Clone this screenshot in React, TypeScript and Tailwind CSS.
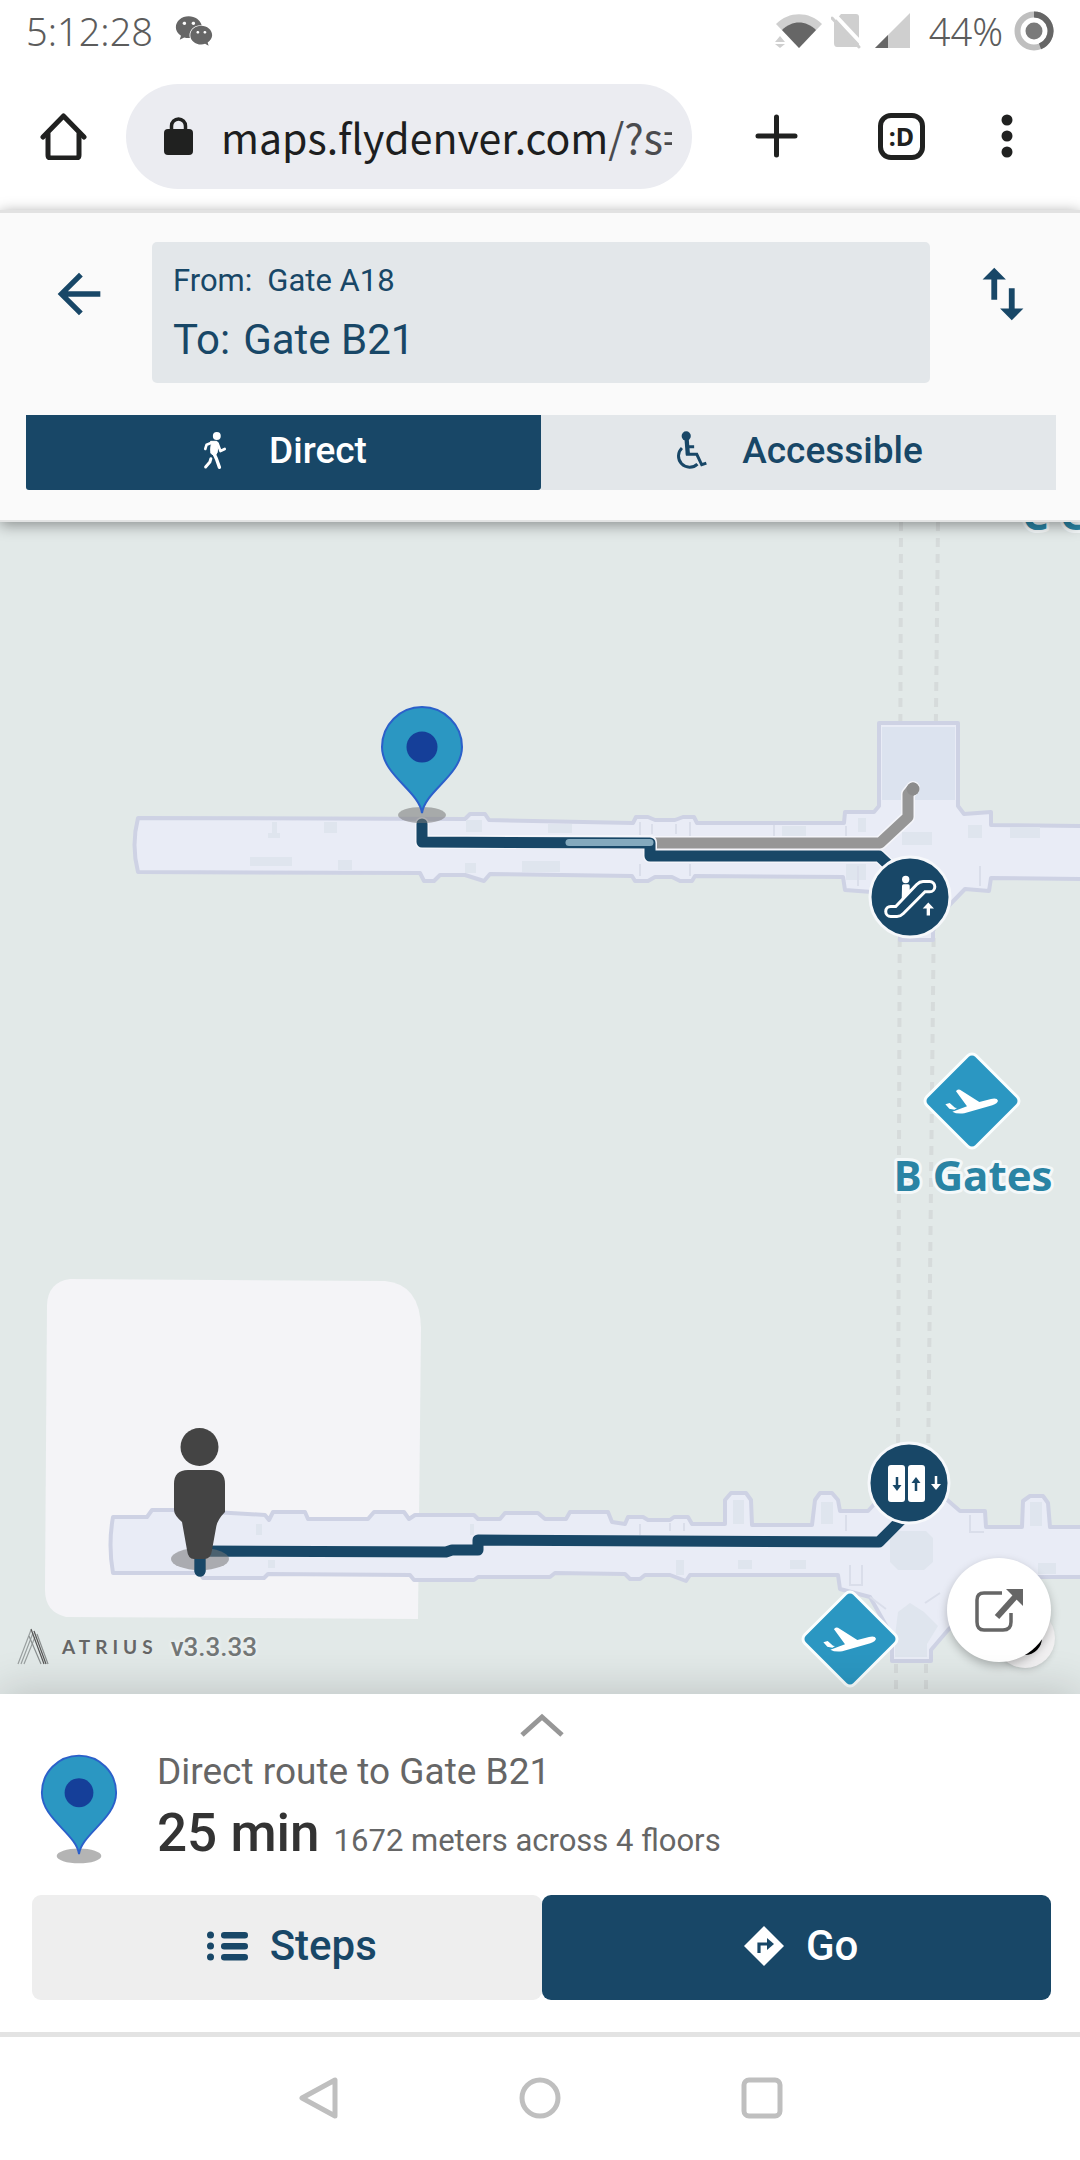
import { FaWeixin } from "react-icons/fa";
import { MdArrowBack, MdSwapVert } from "react-icons/md";

const NAVY = "#184767";

function StatusBar() {
  return (
    <div className="flex h-[62px] items-center justify-between pr-[26px] pl-[26px] font-['Noto_Sans',sans-serif] text-[38px] font-light text-[#5c5c5c]">
      <div className="flex items-center gap-[22px]">
        <span className="leading-[48px]">5:12:28</span>
        <FaWeixin className="h-[34px] w-[38px] text-[#666]" aria-label="WeChat" />
      </div>
      <div className="flex items-center">
        <svg width="48" height="36" viewBox="0 0 48 36" aria-label="Wi-Fi">
          <path d="M1 11C14 -2 34 -2 47 11L24 35Z" fill="#cfcfcf" />
          <path d="M7 17C17 7 31 7 41 17L24 35Z" fill="#666" />
          <path d="M0 29L5 23L10 29ZM0 31L5 35L10 31Z" fill="#cfcfcf" />
        </svg>
        <svg width="30" height="36" viewBox="0 0 30 36" className="ml-[8px]" aria-label="No SIM">
          <path d="M10 1H25Q28 1 28 4V30Q28 34 25 34H6Q3 34 3 30V9Z" fill="#cfcfcf" />
          <path d="M2 0L31 31" stroke="#fff" strokeWidth="4" />
          <path d="M1 5L28 34" stroke="#cfcfcf" strokeWidth="3" strokeLinecap="round" />
        </svg>
        <svg width="36" height="36" viewBox="0 0 36 36" className="ml-[14px]" aria-label="Signal">
          <path d="M0 35L35 0V35Z" fill="#cfcfcf" />
          <path d="M0 35L13 22V35Z" fill="#666" />
        </svg>
        <span className="ml-[18px] leading-[48px]">44%</span>
        <svg width="40" height="40" viewBox="0 0 40 40" className="ml-[11px]" aria-label="Battery">
          <circle cx="20" cy="20" r="16.5" fill="none" stroke="#bfbfbf" strokeWidth="6" />
          <path d="M20 3.500A16.500 16.500 0 0 1 26 35.400" fill="none" stroke="#666" strokeWidth="6" />
          <circle cx="20" cy="20" r="8.500" fill="#7a7a7a" />
        </svg>
      </div>
    </div>
  );
}

function BrowserBar() {
  return (
    <div className="flex h-[148px] items-center pr-[67px] pl-[40px]">
      <button type="button" aria-label="Home">
        <svg width="47" height="48" viewBox="0 0 47 48" fill="none" stroke="#202120" strokeWidth="5" strokeLinecap="round" strokeLinejoin="round">
          <path d="M3 25L23.500 4L44 25" />
          <path d="M8 22V43Q8 46 11 46H36Q39 46 39 43V22" />
        </svg>
      </button>
      <div className="ml-[39px] flex h-[105px] min-w-0 flex-1 items-center rounded-full bg-[#ebecf1] pr-[20px] pl-[38px]">
        <svg width="29" height="38" viewBox="0 0 29 38" className="shrink-0" aria-hidden="true">
          <rect x="0" y="12" width="29" height="26" rx="4" fill="#202120" />
          <path d="M7.500 14V9a7 7 0 0 1 14 0V14" fill="none" stroke="#202120" strokeWidth="3.500" />
        </svg>
        <div className="ml-[28px] min-w-0 flex-1 overflow-hidden font-['Noto_Sans_CJK_SC','Noto_Sans',sans-serif] text-[41px] leading-[60px] whitespace-nowrap text-[#1d1e20]">
          maps.flydenver.com<span className="text-[#4a4b4f]">/?s=</span>
        </div>
      </div>
      <div className="ml-[63px] flex items-center">
        <button type="button" aria-label="New tab">
          <svg width="43" height="44" viewBox="0 0 43 44" stroke="#202120" strokeWidth="5" strokeLinecap="round">
            <path d="M21.500 3V41M3 22H40" />
          </svg>
        </button>
        <button type="button" aria-label="Tabs" className="ml-[80px] flex h-[47px] w-[47px] items-center justify-center rounded-[13px] border-[5px] border-[#202120] font-['Noto_Sans',sans-serif] text-[25px] leading-[30px] font-bold text-[#202120]">
          :D
        </button>
        <button type="button" aria-label="Menu" className="ml-[76px]">
          <svg width="12" height="44" viewBox="0 0 12 44" fill="#202120">
            <circle cx="6" cy="6" r="5.500" />
            <circle cx="6" cy="22" r="5.500" />
            <circle cx="6" cy="38" r="5.500" />
          </svg>
        </button>
      </div>
    </div>
  );
}

function WalkIcon() {
  return (
    <svg width="31" height="39" viewBox="583 633 94 117" fill="none" stroke="currentColor" strokeLinecap="round" strokeLinejoin="round" preserveAspectRatio="none">
      <circle cx="634" cy="648" r="12" fill="currentColor" stroke="none" />
      <path d="M618 668L603 674L599 687" strokeWidth="8" />
      <path d="M636 670L645 693L658 687" strokeWidth="8" />
      <path d="M616 664H634Q640 668 637 680L635 698L628 708L616 700Q614 688 617 672Z" fill="currentColor" strokeWidth="3" />
      <path d="M625 700L633 717L642 742" strokeWidth="10" />
      <path d="M616 716L613 726L600 741" strokeWidth="9" />
    </svg>
  );
}

function WheelchairIcon() {
  return (
    <svg width="31" height="39" viewBox="396 632 94 119" fill="none" stroke="currentColor" strokeWidth="9" preserveAspectRatio="none">
      <circle cx="427" cy="647" r="14" fill="currentColor" stroke="none" />
      <path d="M428 655L432 704" strokeWidth="13" />
      <path d="M430 680H451M426 703H459L474 735L488 730" />
      <path d="M414 684A33 33 0 1 0 461 733" />
    </svg>
  );
}

function RouteHeader() {
  return (
    <header className="relative z-10 border-t-[3px] border-b-2 border-t-[#e2e2e2] border-b-[#e2e3e3] bg-[#fafafa] pr-[24px] pl-[26px] pt-[29px] pb-[30px] text-[#184767] shadow-[0_3px_14px_rgba(0,0,0,0.4)]">
      <div className="flex items-start gap-5">
        <button type="button" aria-label="Back" className="flex h-[104px] w-[106px] items-center justify-center">
          <MdArrowBack size={64} />
        </button>
        <button type="button" className="flex h-[141px] flex-1 flex-col items-start gap-[11px] rounded-[5px] bg-[#e3e7ea] px-[21px] pt-[19px] text-left">
          <span className="flex gap-[15px] text-[31px] leading-[40px]">
            <span>From:</span>
            <span>Gate A18</span>
          </span>
          <span className="flex gap-[13px] text-[42px] leading-[56px]">
            <span>To:</span>
            <span>Gate B21</span>
          </span>
        </button>
        <button type="button" aria-label="Swap start and destination" className="flex h-[104px] w-[106px] items-center justify-center">
          <MdSwapVert size={70} />
        </button>
      </div>
      <div className="mt-8 grid grid-cols-2 text-[37px] leading-[48px] font-medium">
        <button type="button" aria-pressed="true" className="flex h-[75px] items-center justify-center gap-[38px] rounded-b-[3px] bg-[#184767] pb-1 text-white">
          <WalkIcon />
          Direct
        </button>
        <button type="button" aria-pressed="false" className="flex h-[75px] items-center justify-center gap-[35px] bg-[#e3e7ea] pb-1 pl-[2px]">
          <WheelchairIcon />
          Accessible
        </button>
      </div>
    </header>
  );
}

function Pin() {
  return (
    <g>
      <ellipse cx="0" cy="0" rx="24" ry="8" fill="#777" opacity="0.55" />
      <path d="M0 -2C-3 -24 -40 -40 -40 -68A40 40 0 0 1 40 -68C40 -40 3 -24 0 -2Z" fill="#2b97c2" stroke="#2b60ca" strokeWidth="2" />
      <circle cx="0" cy="-68" r="15.500" fill="#153f99" />
    </g>
  );
}

function PlaneSign() {
  return (
    <g>
      <rect x="-35" y="-35" width="70" height="70" rx="6" transform="rotate(45)" fill="#2b97c2" stroke="#fafefe" strokeWidth="3" />
      <path
        transform="scale(0.333) translate(-456 -213)"
        d="M376 223L389 219L405 233L411 234L403 239L388 236ZM397 245L441 229L408 184Q411 176 420 179L478 216L513 207Q532 203 534 212Q533 220 517 226L433 250Q410 253 397 245Z"
        fill="#fff"
      />
    </g>
  );
}

const halo = { paintOrder: "stroke" } as const;

function MapDrawing() {
  return (
    <svg viewBox="0 522 1080 1172" className="block h-auto w-full" role="img" aria-label="Route map">
      <rect x="0" y="522" width="1080" height="1172" fill="#e2e9e8" />
      <path d="M70 1279L385 1281Q420 1284 421 1328L418 1619L66 1617Q45 1612 45 1590L47 1305Q48 1282 70 1279Z" fill="#f4f4f7" />

      <g stroke="#d6dbdb" strokeWidth="4" strokeDasharray="9 7" fill="none">
        <path d="M901 522L898 1470" />
        <path d="M938 522L928 1470" />
        <path d="M896 1664V1694M926 1664V1694" />
      </g>

      <g stroke="#ced2e4" strokeWidth="4" strokeLinejoin="round">
        <path
          d="M138 818L465 819L470 814H485L489 820L633 823L636 817H648L655 820H675L683 817H694L697 823H844L845 812H874L879 806V723H958V806L964 814L991 812V825L1084 826V879L991 878L989 891L965 889L933 922V940H900V922L872 892L845 890L843 877L695 876L692 881H680L672 877H655L648 881H635L632 876L490 874L484 881L465 875H440L434 881H424L420 873L138 872Q131 845 138 818Z"
          fill="#e9ecf6"
        />
        <path
          d="M113 1517H147L152 1510H180L265 1515L269 1520L273 1512H305L308 1519H368L374 1512H404L409 1519L415 1515H474L478 1519H500L505 1513H538L545 1519H566L570 1512H608L612 1522L625 1524L628 1517H643L648 1520H670L674 1517H688L692 1524H725V1500L731 1493H746L751 1500L752 1525H812L815 1500L820 1493H832L838 1500L840 1511H868L880 1498H945L960 1511H985L986 1527H1022L1023 1501L1030 1496H1043L1048 1503L1050 1527H1084V1577H1000L948 1630L931 1650V1661H892V1636L870 1597L840 1589L838 1575H690L686 1581L670 1575H645L640 1579H630L625 1574L555 1573L550 1577L478 1577L474 1580H414L410 1575L268 1574L264 1578H203L200 1573H113Q108 1545 113 1517Z"
          fill="#e9ecf6"
        />
      </g>
      <g fill="#dfe5ee">
        <path d="M882 727H955V800H882Z" fill="#dce3ef" />
        <path d="M272 822H277V833H280V838H268V833H272ZM324 822H337V833H324ZM250 857H292V866H250ZM338 860H352V870H338ZM466 820H482V832H466ZM548 824H572V833H548ZM522 861H560V872H522ZM465 863H476V873H465Z" />
        <path d="M782 826H806V836H782ZM902 832H932V845H902ZM968 825H982V838H968ZM1010 827H1040V838H1010ZM858 818H866V832H858ZM846 864H866V880H846Z" />
        <path d="M890 1538L897 1531H926L933 1538V1562L924 1570H898L890 1562ZM1038 1563H1056V1574H1038ZM738 1560H752V1569H738ZM790 1560H806V1569H790ZM676 1560H684V1575H676ZM256 1524H262V1535H256ZM268 1560H275V1568H268ZM470 1524H474V1535H470Z" />
        <path d="M733 1500H744V1524H733ZM821 1502H833V1524H821ZM1030 1502H1042V1526H1030Z" />
        <path d="M898 1612L910 1603L924 1612L938 1626L927 1644V1657H895V1636Z" />
      </g>
      <g fill="none" stroke="#dadeea" strokeWidth="2">
        <path d="M640 822V836M652 824V834M676 824V834M690 822V836M774 825V836M640 864V876M690 864V876M858 866V886M980 866V886M846 826V836" />
        <path d="M640 1524V1535M670 1523V1531M684 1523V1531M846 1515V1531M970 1515V1532H984M850 1565V1585H862V1565M870 1597L886 1609M925 1603L940 1593" />
      </g>

      <g fill="none" strokeLinejoin="round" strokeLinecap="round">
        <path d="M653 843H880L908 817V794L913 788" stroke="#f4f5fa" strokeWidth="14" />
        <path d="M653 843H880L908 817V794L913 788" stroke="#969696" strokeWidth="11" />
        <circle cx="913" cy="789" r="6.500" fill="#8c8c8c" />
        <path d="M422 824V842H650V856H879L895 871" stroke="#f4f5fa" strokeWidth="14" />
        <path d="M422 824V842L650 843V856H879L895 871" stroke={NAVY} strokeWidth="11" />
        <path d="M569 842.500H650" stroke="#84a9bd" strokeWidth="7" />
        <path d="M200 1571V1551L446 1552L452 1550H478V1540L879 1542L902 1519" stroke={NAVY} strokeWidth="11" />
      </g>

      <g transform="translate(422 815)">
        <Pin />
      </g>

      <g>
        <ellipse cx="200" cy="1559" rx="29" ry="11" fill="#777" opacity="0.55" />
        <path d="M200 1558V1571" stroke={NAVY} strokeWidth="11" strokeLinecap="round" />
        <circle cx="199.500" cy="1447" r="19" fill="#444" />
        <path d="M174 1484Q174 1470 188 1470H211Q225 1470 225 1484V1512Q217 1520 216 1528L212 1550Q211 1559 204 1559H194Q188 1559 187 1550L182 1522Q174 1515 174 1510Z" fill="#444" />
      </g>

      <g>
        <circle cx="910" cy="897" r="40" fill={NAVY} stroke="#f6f8fb" strokeWidth="3" />
        <g transform="translate(600 690) scale(0.333)">
          <path d="M873 650H888L951 584Q960 575 970 575H990A15 15 0 0 1 990 606H976L911 671Q902 680 892 680H873A15 15 0 0 1 873 650Z" fill="none" stroke="#fff" strokeWidth="9" />
          <circle cx="918" cy="569" r="11" fill="#fff" />
          <path d="M907 588Q907 583 912 583H925Q930 583 930 588V600L940 594L906 630Z" fill="#fff" />
          <path d="M986 638L1003 656H991V677H981V656H969Z" fill="#fff" />
        </g>
      </g>

      <g>
        <circle cx="909" cy="1483" r="40" fill={NAVY} stroke="#f6f8fb" strokeWidth="3" />
        <rect x="888" y="1465" width="17" height="37" rx="3" fill="#fff" />
        <rect x="908" y="1465" width="17" height="37" rx="3" fill="#fff" />
        <g strokeWidth="2.500">
          <path d="M897 1477V1487" stroke={NAVY} />
          <path d="M892.500 1485H901.500L897 1491Z" fill={NAVY} />
          <path d="M916 1491V1481" stroke={NAVY} />
          <path d="M911.500 1483H920.500L916 1477Z" fill={NAVY} />
          <path d="M936 1476V1486" stroke="#fff" />
          <path d="M931 1484H941L936 1490Z" fill="#fff" />
        </g>
      </g>

      <g transform="translate(972 1101)">
        <PlaneSign />
      </g>
      <g transform="translate(850 1639)">
        <PlaneSign />
      </g>
      <g className="font-['Open_Sans',sans-serif] text-[42px] font-bold" fill="#2a84a4" stroke="#f4f8f9" strokeWidth="6" strokeLinejoin="round">
        <text x="973" y="1191" textAnchor="middle" style={halo}>
          B Gates
        </text>
        <text x="1022" y="530" style={halo}>
          C Gates
        </text>
      </g>
    </svg>
  );
}

function MapView() {
  return (
    <section className="relative overflow-hidden">
      <MapDrawing />
      <button type="button" aria-label="Compass" className="absolute right-[25px] bottom-[26px] flex h-[60px] w-[60px] items-center justify-center rounded-full bg-[#f1f0f1] shadow-md">
        <span className="h-[34px] w-[34px] rounded-full bg-black" />
      </button>
      <button type="button" aria-label="Share" className="absolute right-[29px] bottom-[32px] flex h-[104px] w-[104px] items-center justify-center rounded-full bg-white shadow-[0_4px_10px_rgba(0,0,0,0.25)]">
        <svg width="50" height="44" viewBox="973 1592 50 44" fill="none" stroke="#666">
          <path d="M1001 1597H983Q976 1597 976 1604V1626Q976 1634 983 1634H1002Q1010 1634 1010 1626V1617" strokeWidth="3.500" />
          <path d="M996 1621L1014 1601" strokeWidth="6" />
          <path d="M1005 1593H1022V1610Z" fill="#666" stroke="none" />
        </svg>
      </button>
      <div className="absolute bottom-[28px] left-[17px] flex items-center text-[#666]">
        <svg width="32" height="38" viewBox="0 0 32 38" fill="none" stroke="#555" strokeWidth="1.200">
          <path d="M14 2L1 36M16 5L4 36M18 9L7 36" stroke="#9aa0a0" />
          <path d="M14 1L27 36M17 3L29 36" />
          <path d="M12 8L24 36M20 6L31 36" stroke="#8a8f8f" />
        </svg>
        <span className="ml-[13px] font-['Lato',sans-serif] text-[19px] leading-[36px] font-bold tracking-[5px]">ATRIUS</span>
        <span className="ml-[13px] text-[26px] leading-[36px] font-medium text-[#737777] [text-shadow:0_0_4px_#fff]">v3.3.33</span>
      </div>
    </section>
  );
}

function StepsIcon() {
  return (
    <svg width="41" height="30" viewBox="0 0 41 30" fill="currentColor">
      <circle cx="3.500" cy="4" r="3.500" />
      <circle cx="3.500" cy="15" r="3.500" />
      <circle cx="3.500" cy="26" r="3.500" />
      <rect x="14" y="1" width="27" height="6.500" rx="3.200" />
      <rect x="14" y="12" width="27" height="6.500" rx="3.200" />
      <rect x="14" y="23" width="27" height="6.500" rx="3.200" />
    </svg>
  );
}

function GoIcon() {
  return (
    <svg width="40" height="40" viewBox="0 0 40 40">
      <path d="M20 0L40 20L20 40L0 20Z" fill="#fff" />
      <path d="M15 27V18H24" fill="none" stroke={NAVY} strokeWidth="3.200" />
      <path d="M23 12L30 18L23 24Z" fill={NAVY} />
    </svg>
  );
}

function RoutePanel() {
  return (
    <section className="relative z-10 bg-white pr-[29px] pl-[32px] pb-[32px] shadow-[0_-4px_40px_rgba(0,0,0,0.16)]">
      <button type="button" aria-label="Expand" className="mx-auto flex h-[53px] w-[120px] items-center justify-center pt-2">
        <svg width="44" height="24" viewBox="0 0 44 24" fill="none" stroke="#979797" strokeWidth="5">
          <path d="M2 22L22 4L42 22" />
        </svg>
      </button>
      <div className="flex h-[148px] items-start">
        <svg width="78" height="112" viewBox="-42 -110 84 119" className="mt-[6px] ml-[8px]" aria-hidden="true">
          <Pin />
        </svg>
        <div className="ml-[39px]">
          <h1 className="text-[37px] leading-[50px] text-[#666]">Direct route to Gate B21</h1>
          <p className="mt-[6px] flex items-baseline gap-[14px] leading-[60px]">
            <strong className="text-[53px] font-medium text-[#333]">25 min</strong>
            <span className="text-[31px] text-[#666]">1672 meters across 4 floors</span>
          </p>
        </div>
      </div>
      <div className="grid grid-cols-2 text-[42px] leading-[52px] font-medium">
        <button type="button" className="flex h-[105px] items-center justify-center gap-[22px] rounded-[9px] bg-[#eeeeee] pb-1 pl-[10px] text-[#184767]">
          <StepsIcon />
          Steps
        </button>
        <button type="button" className="flex h-[105px] items-center justify-center gap-[22px] rounded-[9px] bg-[#184767] pb-1 pl-[10px] text-white">
          <GoIcon />
          Go
        </button>
      </div>
    </section>
  );
}

function SystemNav() {
  return (
    <nav className="relative z-10 flex h-[128px] items-center justify-center gap-[180px] border-t-[5px] border-[#e3e3e3] bg-white pb-[2px]">
      <button type="button" aria-label="Back">
        <svg width="42" height="42" viewBox="0 0 42 42" fill="none" stroke="#bfbfbf" strokeWidth="5" strokeLinejoin="round">
          <path d="M38 3V39L5 21Z" />
        </svg>
      </button>
      <button type="button" aria-label="Home">
        <svg width="42" height="42" viewBox="0 0 42 42" fill="none" stroke="#bfbfbf" strokeWidth="5">
          <circle cx="21" cy="21" r="18" />
        </svg>
      </button>
      <button type="button" aria-label="Recent apps">
        <svg width="42" height="42" viewBox="0 0 42 42" fill="none" stroke="#bfbfbf" strokeWidth="5">
          <rect x="3" y="3" width="36" height="36" rx="5" />
        </svg>
      </button>
    </nav>
  );
}

export default function App() {
  return (
    <main className="w-full overflow-hidden bg-white font-['Roboto',sans-serif]">
      <StatusBar />
      <BrowserBar />
      <RouteHeader />
      <MapView />
      <RoutePanel />
      <SystemNav />
    </main>
  );
}
